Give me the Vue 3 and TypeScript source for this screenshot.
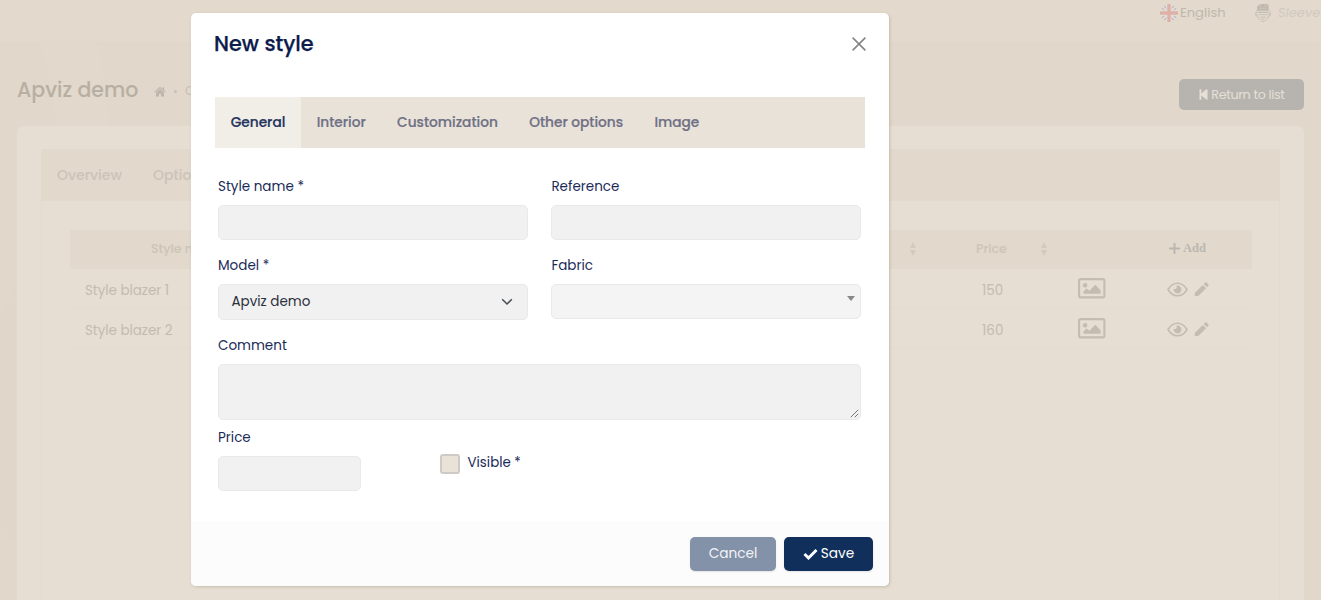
<script setup lang="ts">
import { ref } from 'vue'

interface Row { name: string; price: number }

const tabs: string[] = ['General', 'Interior', 'Customization', 'Other options', 'Image']
const active = ref<string>('General')
const rows: Row[] = [
  { name: 'Style blazer 1', price: 150 },
  { name: 'Style blazer 2', price: 160 },
]
</script>

<template>
  <div class="page">
    <svg class="waves" viewBox="0 0 1321 560" width="1321" height="560">
      <path class="wave-a" d="M38 0C48 30 54 56 55 86H110C108 56 104 28 97 0Z" />
      <path class="wave-b" d="M0 272Q9 262 17 246V502Q8 498 0 491Z" />
    </svg>
    <header class="topbar">
      <span class="lang">
        <svg width="18" height="18" viewBox="0 0 18 18">
          <circle cx="9" cy="9" r="9" fill="#e4dcd3" />
          <path d="M3 3l12 12M15 3L3 15" stroke="#b9bac0" stroke-width="4.400" />
          <path d="M2.600 2.600l12.800 12.800M15.400 2.600L2.600 15.400" stroke="#e6ded5" stroke-width="2" />
          <path d="M9 0v18M0 9h18" stroke="#e6ded5" stroke-width="5.400" />
          <path d="M9 0v18M0 9h18" stroke="#deb0a8" stroke-width="3.400" />
        </svg>
        <span>English</span>
      </span>
      <span class="brand">
        <svg width="16" height="20" viewBox="0 0 16 20" fill="none" stroke="#c5bdb1">
          <path d="M2.200 7V3.500L5 1.200 12 .8l1.600 2V7z" fill="#bfb8ad" stroke="none" />
          <path d="M4 3.500l3-1M9 2l3 .8M4 5.200h8" stroke="#d4cbbf" stroke-width=".8" />
          <path d="M1.800 7.500v4.500q.4 3.600 6.200 7 5.800-3.400 6.200-7V7.500zM.6 9.400v3l2 1M15.400 9.400v3l-2 1" stroke-width=".8" />
          <path d="M3 9.300h10" stroke="#bab3a8" />
          <path d="M3.500 11.700h9M5 14.200h6M7 16.200h2" stroke-width=".9" />
        </svg>
        <i>Sleeve</i>
      </span>
    </header>

    <div class="headline">
      <h1>Apviz demo</h1>
      <svg class="home" width="12" height="11" viewBox="0 0 12 11" fill="#beb6aa">
        <path d="M6 .7L.2 5.800l.7.8L6 2.200l5.100 4.400.7-.8-1.700-1.500V1.400H8.600V3z" />
        <path d="M6 3.100L2 6.500V10q0 .5.500.5H5V7.700h2v2.800h2.500q.5 0 .5-.5V6.500z" />
      </svg>
      <span class="dot"></span>
      <span class="crumb">C</span>
      <button class="return">
        <svg width="9" height="11" viewBox="0 0 9 11" fill="#e5dfd5">
          <path d="M.5.200h1.800v4.300L7.400.3Q8.400-.2 8.500.8v9.400q-.1 1-1.100.4L2.300 6.500v4.300H.5z" />
        </svg>
        <span>Return to list</span>
      </button>
    </div>

    <main class="panel">
      <div class="inner">
        <nav class="page-tabs"><span>Overview</span><span>Options</span></nav>
        <div class="grid">
          <div class="thead">
            <span class="c-name">Style name</span>
            <svg class="sort" width="8" height="14" viewBox="0 0 8 14"><path d="M4 0l3 6H1zM4 14L1 8h6z" /></svg>
            <span class="c-price">Price</span>
            <svg class="sort" width="8" height="14" viewBox="0 0 8 14"><path d="M4 0l3 6H1zM4 14L1 8h6z" /></svg>
            <span></span>
            <span class="c-add">
              <svg width="11" height="11" viewBox="0 0 11 11"><path d="M5.500 0v11M0 5.500h11" stroke="#bbb7b0" stroke-width="2" /></svg>
              <b>Add</b>
            </span>
          </div>
          <div v-for="r in rows" :key="r.name" class="trow">
            <span class="t-name">{{ r.name }}</span>
            <span></span>
            <span class="t-price">{{ r.price }}</span>
            <span></span>
            <svg class="pic" width="28" height="21" viewBox="0 0 28 21">
              <rect x="1.100" y="1.100" width="25.300" height="18.300" rx="1.600" fill="none" stroke="#c5bcb0" stroke-width="2.100" />
              <circle cx="7.100" cy="7.200" r="2.200" />
              <path d="M5.500 15.800v-2.400l3-3 2.800 2.400 6-6 5.300 5.500v3.500z" />
            </svg>
            <span class="acts">
              <svg width="21" height="15" viewBox="0 0 21 15">
                <path d="M1 7.500Q4.700 1.200 10.500 1.200T20 7.500q-3.700 6.300-9.500 6.300T1 7.500z" fill="none" stroke="#c5bcb0" stroke-width="1.600" />
                <path d="M10.500 3.600a3.900 3.900 0 1 1-3.800 3.200q1.300.7 2.600-.3.800-1.100.2-2.700z" />
              </svg>
              <svg width="15" height="15" viewBox="0 0 15 15">
                <path d="M.5 14.300l.7-3.900 7.600-7.500 3.300 3.300-7.600 7.500zM9.700 2L11.200.6q.7-.5 1.400 0l1.800 1.800q.5.700 0 1.400L13 5.300z" />
              </svg>
            </span>
          </div>
        </div>
      </div>
    </main>

    <div class="modal">
      <div class="m-head">
        <h2>New style</h2>
        <svg width="14" height="14" viewBox="0 0 14 14"><path d="M.6.6l12.800 12.800M13.400.6L.6 13.400" stroke="#858585" stroke-width="1.600" /></svg>
      </div>
      <nav class="m-tabs">
        <button v-for="t in tabs" :key="t" :class="{ on: active === t }" @click="active = t">{{ t }}</button>
      </nav>
      <div class="form">
        <label class="field"><span>Style name *</span><i class="box"></i></label>
        <label class="field"><span>Reference</span><i class="box"></i></label>
        <label class="field"><span>Model *</span>
          <i class="box select"><b>Apviz demo</b>
            <svg width="12" height="8" viewBox="0 0 12 8"><path d="M1.200 1.300L6 6l4.800-4.700" fill="none" stroke="#4a4f55" stroke-width="1.600" /></svg>
          </i>
        </label>
        <label class="field"><span>Fabric</span>
          <i class="box combo"><svg width="8" height="5" viewBox="0 0 8 5"><path d="M0 0h8L4 5z" fill="#888" /></svg></i>
        </label>
        <label class="field wide"><span>Comment</span>
          <i class="box area"><svg width="9" height="9" viewBox="0 0 9 9"><path d="M.8 8.200l7.400-7.400M4.800 8.200l3.400-3.400" stroke="#666" stroke-width=".9" /></svg></i>
        </label>
      </div>
      <div class="last">
        <label class="field"><span>Price</span><i class="box"></i></label>
        <label class="check"><i></i><span>Visible *</span></label>
      </div>
      <footer>
        <button class="cancel">Cancel</button>
        <button class="save">
          <svg width="15" height="11" viewBox="0 0 15 11"><path d="M1.500 5l4 4L13.500 1" fill="none" stroke="#fff" stroke-width="2.900" /></svg>
          <span>Save</span>
        </button>
      </footer>
    </div>
  </div>
</template>

<style>
html, body { margin: 0; overflow: hidden; }
</style>

<style scoped>
* { box-sizing: border-box; }
.page {
  position: relative;
  width: 1321px;
  height: 600px;
  overflow: hidden;
  background: #e1d7ca;
  font-family: Poppins, Inter, "Liberation Sans", sans-serif;
  font-size: 14px;
  color: #c9c0b5;
}
button { font: inherit; border: 0; padding: 0; white-space: nowrap; }
svg { display: block; flex: none; }
.waves { position: absolute; left: 0; top: 41px; }
.wave-a { fill: #e2d8cc; }
.wave-b { fill: #e0d6c9; }

.topbar { position: relative; display: flex; height: 41px; padding: 4px 0 0 1160px; background: #e3dacd; white-space: nowrap; }
.lang { display: flex; align-items: center; width: 95px; height: 18px; gap: 2px; color: #bfb7ac; font-size: 13.100px; }
.brand { display: flex; align-items: center; height: 18px; gap: 7px; color: #d2c9bd; font-size: 13px; }

.headline { position: relative; display: flex; align-items: center; height: 85px; padding: 0 16.600px 0 17px; }
h1 { margin: 13px 0 0; font-size: 20.500px; line-height: 28px; font-weight: 500; color: #b8afa3; width: 137px; white-space: nowrap; }
.home { margin-top: 15px; }
.dot { width: 3px; height: 3px; border-radius: 50%; margin: 15px 8px 0 8px; background: #c8bfb3; }
.crumb { margin-top: 15px; font-size: 12px; }
.return { display: flex; align-items: center; justify-content: center; gap: 3px; width: 125px; height: 31px; margin: 22.800px 0 0 auto; border-radius: 5px; background: #b7b4af; color: #e5dfd5; font-size: 12.800px; letter-spacing: -.4px; }

.panel { position: relative; width: 1287px; height: 480px; margin-left: 17px; padding: 23px 24px 0; border-radius: 6px; background: #e6ded2; }
.inner { height: 460px; border: 1px solid #e3dace; border-width: 0 1px; }
.page-tabs { display: flex; gap: 31px; height: 52px; margin: 0 -1px; padding: 1px 0 0 16px; align-items: center; background: #e2d8cb; color: #cdc3b9; font-weight: 500; }
.grid { margin: 29px 27px 0 28px; }
.thead, .trow { display: grid; grid-template-columns: 836px 44px 87px 38px 72px 1fr; align-items: center; }
.thead { height: 39px; padding-bottom: 2px; background: #e2d8cb; color: #cdc4b8; font-weight: 500; font-size: 12.500px; }
.trow { height: 40px; border-bottom: 1px solid #e4dbcf; color: #c4bbb0; font-size: 13.500px; }
.c-name { padding-left: 81px; }
.sort { fill: #d3cabd; margin-left: 3px; }
.c-price { padding-left: 26px; }
.t-price { padding: 4px 0 0 32px; }
.c-add { display: flex; gap: 3px; padding-left: 22px; align-items: center; color: #bbb7b0; }
.c-add b { font: bold 12.500px "Liberation Serif", serif; }
.t-name { padding: 4px 0 0 15px; letter-spacing: -.05px; }
.pic { fill: #c5bcb0; margin-left: 3px; }
.acts { display: flex; gap: 6px; padding: 2px 0 0 20px; fill: #c5bcb0; }

.modal { position: absolute; left: 191px; top: 13px; width: 698px; height: 573px; border-radius: 5px; background: #fff; color: #1b2b57; box-shadow: 1px 1px 3px rgba(90, 75, 50, .22); overflow: hidden; }
.m-head { display: flex; justify-content: space-between; align-items: center; height: 61px; padding: 0 23px; }
h2 { margin: 0; font-size: 20.800px; font-weight: 500; color: #0d1b4c; -webkit-text-stroke: .25px #0d1b4c; }
.m-tabs { display: flex; height: 51px; margin: 23px 24px 0; background: #e9e2d8; }
.m-tabs button { padding: 0 15.700px; background: none; color: #6f7085; font-weight: 500; font-size: 13.720px; -webkit-text-stroke: .2px; }
.m-tabs .on { background: #f1eee8; color: #22335c; }
.form { display: grid; grid-template-columns: 310px 310px; column-gap: 23.400px; margin: 26.500px 27px 0; }
.field { display: block; height: 79.500px; }
.field > span { display: block; height: 30px; line-height: 24px; font-size: 13.500px; }
.box { display: flex; height: 35.500px; font-style: normal; border: 1.500px solid #e9e9e9; border-radius: 5px; background: #f1f1f1; }
.select { align-items: center; justify-content: space-between; padding: 0 14px 0 12.500px; color: #2c303b; }
.select b { font-weight: 400; font-size: 13.500px; }
.combo { height: 35px; background: #f4f4f4; justify-content: flex-end; padding: 11px 5px 0 0; }
.wide { grid-column: 1 / 3; height: 92px; }
.area { height: 56px; justify-content: flex-end; align-items: flex-end; padding: 0 1px 1px 0; }
.last { display: flex; margin-left: 27px; }
.last .field { width: 143px; height: 96px; }
.check { display: flex; align-items: flex-start; margin: 28px 0 0 79px; }
.check i { width: 20px; height: 20px; margin-right: 7.500px; border: 2px solid #d0cac6; border-radius: 3px; background: #e9e2d8; }
.check span { line-height: 20px; margin-top: -.5px; font-size: 13.400px; }
footer { position: absolute; left: 0; right: 0; bottom: 0; display: flex; justify-content: flex-end; gap: 8px; height: 65px; padding: 16px 16px 0 0; background: #fcfcfc; }
footer button { height: 34px; border-radius: 5px; color: #fff; font-size: 13.700px; box-shadow: 0 1px 2px rgba(0, 0, 0, .1); }
.cancel { width: 86px; background: #8392a8; color: #f1f3f6; }
.save { display: flex; align-items: center; justify-content: center; gap: 3px; width: 89px; background: #10305b; }
</style>
